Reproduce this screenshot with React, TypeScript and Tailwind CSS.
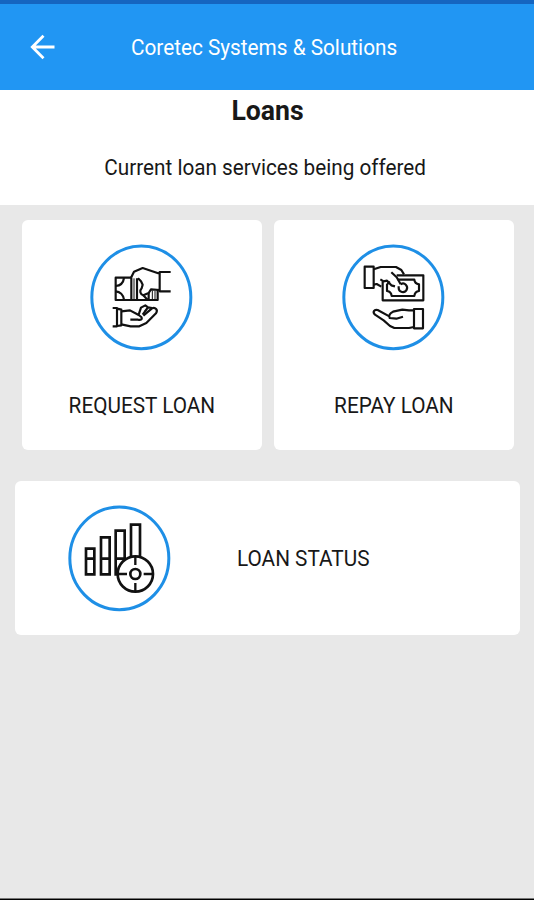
import type { ReactNode } from "react";

function IconCircle({ children }: { children: ReactNode }) {
  return (
    <svg
      viewBox="0 0 372 372"
      className="w-[124px] h-[124px] shrink-0"
      fill="none"
      stroke="#111"
      strokeWidth="6.500"
      strokeLinejoin="round"
    >
      <ellipse cx="184" cy="187" rx="148.500" ry="154" stroke="#1e8fe6" strokeWidth="9" />
      {children}
    </svg>
  );
}

function RequestIcon() {
  return (
    <IconCircle>
      {/* bank notes */}
      <path d="M153 128H107V195H233V165" />
      <path d="M107 153C120 152 130 143 132 129M107 169C120 170 130 180 132 194" />
      <path d="M154 128V194M171 130V194" />
      <path d="M162 130V194M217 167V194M225 167V194" strokeWidth="3" />
      {/* giving hand */}
      <path d="M153 128L162 110L188 99L239 116M272 111H239V169H272M239 165L213 163L206 174L190 181C180 177 178 167 185 160L188 149L183 139L174 130" />
      <path d="M190 181L201 193M206 174V193" />
      {/* receiving hand */}
      <path d="M98 219H111V274H98M111 221L124 224V271L111 273" />
      <path d="M124 229L150 226L176 240L184 246C188 254 181 256 174 254H151" />
      <path d="M124 268L152 274H178L199 264L228 235C235 225 226 216 216 220L190 242" />
      <path d="M176 239L183 218L196 211L204 217L188 239M194 230L204 217L216 219" />
    </IconCircle>
  );
}

function RepayIcon() {
  return (
    <IconCircle>
      {/* paying hand */}
      <path d="M98 95H125V159H98Z" />
      <path d="M125 103L146 96H192L208 105L216 118" />
      <path d="M125 149L134 147L148 155M178 112L194 127L206 148M145 133L155 139L165 137L178 151L189 154" />
      {/* bank note */}
      <path d="M194 121H274V196H152V139" />
      <path d="M197 134H247C248 143 253 147 261 148V168C253 169 248 174 247 183H179C178 174 173 169 165 168V149L173 139" />
      <path d="M206 148C218 140 229 154 224 164C218 176 200 172 200 159V154" />
      {/* open palm */}
      <path d="M246 222H273V280H246Z" />
      <path d="M246 226H231L211 224L183 230C174 234 169 242 173 249L193 251L213 245" />
      <path d="M172 244L137 225C126 222 121 232 129 239L155 256L174 273L187 279H231L246 276" />
    </IconCircle>
  );
}

function StatusIcon() {
  return (
    <IconCircle>
      <g strokeWidth="8" strokeLinejoin="miter" transform="translate(0 -3)">
        <path d="M84 161H109V238H84ZM84 191H109" />
        <path d="M129 127H155V238H129ZM129 191H155" />
        <path d="M182 238H173V107H200V193M173 191H200" />
        <path d="M219 184V89H246V184" />
        <circle cx="232" cy="237" r="53" />
        <circle cx="232" cy="237" r="15" />
        <path d="M232 184V210M232 264V290M179 237H207M257 237H285" strokeWidth="7" />
      </g>
    </IconCircle>
  );
}

function LoanCard({ icon, label }: { icon: ReactNode; label: string }) {
  return (
    <button className="flex flex-col items-center w-[240px] h-[230px] pt-[15px] bg-white rounded-md">
      {icon}
      <span className="mt-[32px] text-[21.5px] leading-[30px] whitespace-nowrap scale-x-[0.966]">{label}</span>
    </button>
  );
}

export default function App() {
  return (
    <div className="flex flex-col w-full h-[900px] bg-[#e8e8e8] font-['Roboto',sans-serif] text-[#181818]">
      <div className="h-1 shrink-0 bg-[#1565c0]" />

      <header className="flex items-center h-[86px] shrink-0 bg-[#2196f3] text-white">
        <button className="ml-[30px] w-[25px]">
          <svg viewBox="0 0 25 26" className="w-[25px] h-[26px]" fill="none" stroke="white" strokeWidth="2.800">
            <path d="M24.500 13H2.500M13.500 1.800L2.300 13L13.500 24.200" />
          </svg>
        </button>
        <h1 className="ml-[76px] pt-[2px] text-[22px] leading-[30px] whitespace-nowrap origin-left scale-x-[0.943]">
          Coretec Systems &amp; Solutions
        </h1>
      </header>

      <section className="h-[115px] shrink-0 bg-white text-center">
        <h2 className="pt-[5px] pl-px text-[27px] leading-[32px] font-bold scale-x-[0.985]">Loans</h2>
        <p className="mt-[26px] pr-1 text-[22px] leading-[30px] scale-x-[0.941]">Current loan services being offered</p>
      </section>

      <main className="flex-1">
        <div className="flex gap-3 pl-[22px] pt-[15px]">
          <LoanCard icon={<RequestIcon />} label="REQUEST LOAN" />
          <LoanCard icon={<RepayIcon />} label="REPAY LOAN" />
        </div>
        <button className="flex items-center ml-[15px] mt-[31px] w-[505px] h-[154px] pl-[43px] bg-white rounded-md">
          <StatusIcon />
          <span className="ml-[55px] pt-[2px] text-[21.5px] leading-[30px] whitespace-nowrap origin-left scale-x-[0.966]">
            LOAN STATUS
          </span>
        </button>
      </main>

      <div className="h-[2px] shrink-0 bg-black border-t border-[#777]" />
    </div>
  );
}
